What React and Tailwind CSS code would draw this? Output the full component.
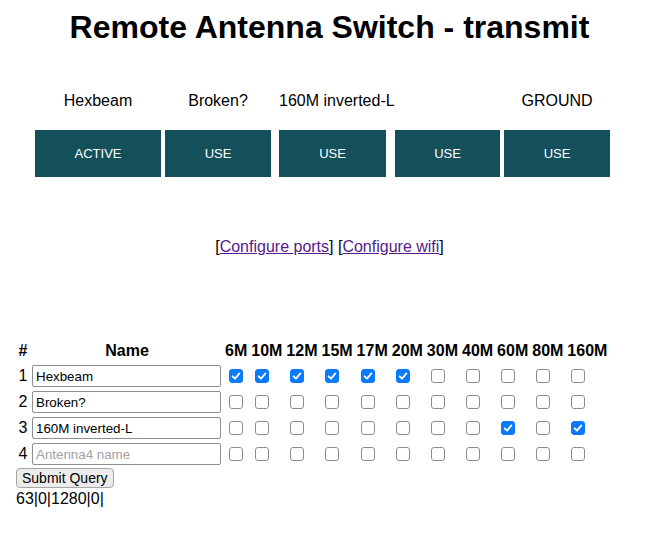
import { useState } from 'react';

const BANDS = ['6M', '10M', '12M', '15M', '17M', '20M', '30M', '40M', '60M', '80M', '160M'];

const PORTS = [
  { label: 'Hexbeam', action: 'ACTIVE', width: 'w-[126px]', gap: '' },
  { label: 'Broken?', action: 'USE', width: 'w-[106px]', gap: 'ml-[4px]' },
  { label: '160M inverted-L', action: 'USE', width: 'w-[107px]', gap: 'ml-[8px]' },
  { label: '', action: 'USE', width: 'w-[105px]', gap: 'ml-[9px]' },
  { label: 'GROUND', action: 'USE', width: 'w-[106px]', gap: 'ml-[4px]' },
];

const initialRows = [
  { name: 'Hexbeam', bands: [1, 1, 1, 1, 1, 1, 0, 0, 0, 0, 0] },
  { name: 'Broken?', bands: [0, 0, 0, 0, 0, 0, 0, 0, 0, 0, 0] },
  { name: '160M inverted-L', bands: [0, 0, 0, 0, 0, 0, 0, 0, 1, 0, 1] },
  { name: '', bands: [0, 0, 0, 0, 0, 0, 0, 0, 0, 0, 0] },
];

const Check = ({ checked, onChange }) => (
  <label className="relative ml-[5px] w-[14px] h-[14px] block">
    <input
      type="checkbox"
      checked={checked}
      onChange={onChange}
      className="appearance-none block w-[14px] h-[14px] m-0 rounded-[3px] border border-[#8b8b90] bg-white checked:bg-[#0a7aff] checked:border-[#0a7aff]"
    />
    {checked && (
      <svg viewBox="0 0 14 14" className="absolute inset-0 w-[14px] h-[14px] pointer-events-none">
        <path d="M3.6 7.3 L6 9.6 L10.4 4.4" fill="none" stroke="white" strokeWidth="1.8" strokeLinecap="round" strokeLinejoin="round" />
      </svg>
    )}
  </label>
);

export default function App() {
  const [rows, setRows] = useState(initialRows);

  const toggle = (r, b) => {
    const next = rows.map((row, i) =>
      i === r ? { ...row, bands: row.bands.map((v, j) => (j === b ? (v ? 0 : 1) : v)) } : row
    );
    setRows(next);
  };

  const rename = (r, value) => {
    setRows(rows.map((row, i) => (i === r ? { ...row, name: value } : row)));
  };

  return (
    <div className="w-[659px] min-h-[533px] bg-white text-black font-['Liberation_Sans',Arial,sans-serif] text-[16px]">
      <h1 className="pt-[9px] text-center text-[32px] leading-[37px] font-bold">Remote Antenna Switch - transmit</h1>

      {/* port names + switch buttons */}
      <div className="mt-[46px] pl-[35px]">
        <div className="flex h-[18px] leading-[18px]">
          {PORTS.map((p, i) => (
            <div key={i} className={`${p.width} ${p.gap} text-center whitespace-nowrap`}>{p.label}</div>
          ))}
        </div>
        <div className="flex mt-[20px]">
          {PORTS.map((p, i) => (
            <button
              key={i}
              className={`${p.width} ${p.gap} h-[47px] bg-[#144f5c] text-white text-[13px] leading-none`}
            >
              {p.action}
            </button>
          ))}
        </div>
      </div>

      <div className="mt-[61px] text-center leading-[18px]">
        [<a href="#ports" className="text-[#551a8b] underline">Configure ports</a>]{' '}
        [<a href="#wifi" className="text-[#551a8b] underline">Configure wifi</a>]
      </div>

      <form className="mt-[85px] pl-[16px]" onSubmit={(e) => e.preventDefault()}>
        <div className="grid grid-cols-[14px_190px_repeat(11,auto)] gap-x-[2px] gap-y-[2px] w-max">
          <div className="h-[21px] pt-px leading-[18px] font-bold text-center">#</div>
          <div className="h-[21px] pt-px leading-[18px] font-bold text-center">Name</div>
          {BANDS.map((b) => (
            <div key={b} className="h-[21px] pt-px px-px leading-[18px] font-bold text-center">{b}</div>
          ))}

          {rows.map((row, r) => (
            <div key={r} className="contents">
              <div className="h-[24px] flex items-center justify-center leading-[18px]">{r + 1}</div>
              <div className="h-[24px] flex items-center">
                <input
                  type="text"
                  value={row.name}
                  placeholder={`Antenna${r + 1} name`}
                  onChange={(e) => rename(r, e.target.value)}
                  className="w-[189px] h-[22px] pl-[3px] border border-[#8e8e93] rounded-[2px] text-[13.33px] leading-none placeholder:text-[#a3a3a8] outline-none"
                />
              </div>
              {row.bands.map((v, b) => (
                <div key={b} className="h-[24px] flex items-center pb-[1px]">
                  <Check checked={!!v} onChange={() => toggle(r, b)} />
                </div>
              ))}
            </div>
          ))}
        </div>
        <button
          type="submit"
          className="mt-[2px] h-[20px] px-[5px] border border-[#a6a6a6] rounded-[4px] bg-[#ececec] text-[14px] leading-none"
        >
          Submit Query
        </button>
        <div className="leading-[18px]">63|0|1280|0|</div>
      </form>
    </div>
  );
}
